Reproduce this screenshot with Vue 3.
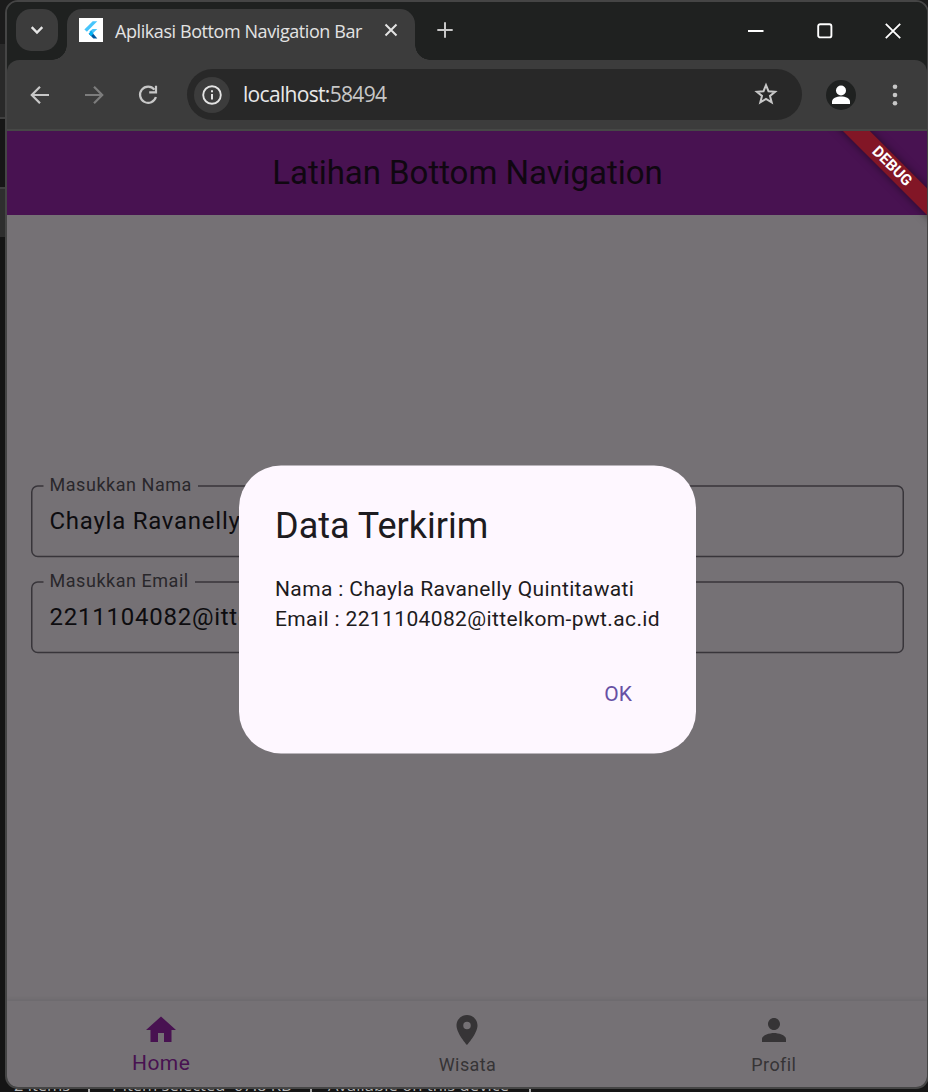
<script setup>
const fields = [
  { label: 'Masukkan Nama', value: 'Chayla Ravanelly Quintitawati', gapEnd: 167 },
  { label: 'Masukkan Email', value: '2211104082@ittelkom-pwt.ac.id', gapEnd: 164 },
]
const outline = (gapEnd) =>
  `M12.5 1H6.75A6 6 0 0 0 .75 7V65.5A6 6 0 0 0 6.75 71.5H866.25A6 6 0 0 0 872.25 65.5V7A6 6 0 0 0 866.25 1H${gapEnd}`

const tabs = [
  { label: 'Home', active: true, icon: 'M10 20v-6h4v6h5v-8h3L12 3 2 12h3v8z' },
  {
    label: 'Wisata',
    icon: 'M12 2C8.13 2 5 5.13 5 9c0 5.25 7 13 7 13s7-7.75 7-13c0-3.87-3.13-7-7-7zm0 9.5a2.5 2.5 0 0 1 0-5 2.5 2.5 0 0 1 0 5z',
  },
  {
    label: 'Profil',
    icon: 'M12 12c2.21 0 4-1.79 4-4s-1.79-4-4-4-4 1.79-4 4 1.79 4 4 4zm0 2c-2.67 0-8 1.34-8 4v2h16v-2c0-2.66-5.33-4-8-4z',
  },
]
const statusItems = ['2 items', '1 item selected  67.8 KB', 'Available on this device']
</script>

<template>
  <div class="desktop">
    <div class="behind">
      <i class="b1"></i><i class="b2"></i><i class="b3"></i><i class="b4"></i><i class="b5"></i>
    </div>
    <div class="status">
      <span v-for="s in statusItems" :key="s" class="status-item">{{ s }}</span>
    </div>

    <div class="window">
      <header class="titlebar">
        <button class="tab-search">
          <svg width="42" height="42" viewBox="0 0 42 42"><path d="M15.7 18.2l5.3 5.3 5.3-5.3" fill="none" stroke="#e6e6e6" stroke-width="2.4" /></svg>
        </button>
        <div class="tab">
          <svg class="favicon" width="24" height="24" viewBox="0 0 24 24">
            <rect width="24" height="24" fill="#fff" />
            <path d="M13.7 3.3h4.6L7.9 13.7 5.4 11.4z" fill="#47c5fb" />
            <path d="M13.7 11h4.6l-5.2 5.1-2.8-2.6z" fill="#47c5fb" />
            <path d="M9.7 15.7l2.4-2.4 6.2 7.3h-3.9z" fill="#00569e" />
            <path d="M9.7 15.7l2.4-2.4 2.4 2.4-2.4 2.4z" fill="#00b5f8" />
          </svg>
          <span class="tab-title">Aplikasi Bottom Navigation Bar</span>
          <svg class="tab-close" width="14" height="14" viewBox="0 0 14 14"><path d="M1.5 1.5l11 11M12.5 1.5l-11 11" stroke="#e3e3e3" stroke-width="2" /></svg>
        </div>
        <svg class="new-tab" width="16" height="16" viewBox="0 0 16 16"><path d="M8 .3v15.4M.3 8h15.4" stroke="#c7c7c7" stroke-width="2" /></svg>
        <div class="controls">
          <svg width="16" height="16" viewBox="0 0 16 16"><path d="M0 8h15.5" stroke="#fff" stroke-width="2" /></svg>
          <svg width="16" height="16" viewBox="0 0 16 16"><rect x="1.2" y="1.2" width="13.2" height="13.2" rx="2" fill="none" stroke="#fff" stroke-width="1.9" /></svg>
          <svg width="16" height="16" viewBox="0 0 16 16"><path d="M.8 .8l14.4 14.4M15.2 .8L.8 15.2" stroke="#fff" stroke-width="1.8" /></svg>
        </div>
      </header>

      <div class="toolbar">
        <svg class="nav-icon" width="20" height="20" viewBox="0 0 20 20"><path d="M19 10H2.5M10 1.8L1.8 10l8.2 8.2" fill="none" stroke="#c7c7c7" stroke-width="2.2" /></svg>
        <svg class="nav-icon" width="20" height="20" viewBox="0 0 20 20"><path d="M1 10h16.5M10 1.8L18.2 10 10 18.2" fill="none" stroke="#7c7c7c" stroke-width="2.2" /></svg>
        <svg class="nav-icon" width="20" height="20" viewBox="0 0 20 20"><path d="M16.400 4.600A8.100 8.100 0 1 0 17.900 12M18 .8V7.300H11.200" fill="none" stroke="#c7c7c7" stroke-width="2.2" /></svg>
        <div class="omnibox">
          <div class="site-info">
            <svg width="20" height="20" viewBox="0 0 20 20"><circle cx="10" cy="10" r="8.8" fill="none" stroke="#e3e3e3" stroke-width="1.9" /><path d="M10 9v5.500M10 5.200v2.100" stroke="#e3e3e3" stroke-width="2" /></svg>
          </div>
          <span class="url">localhost:<span class="port">58494</span></span>
          <svg class="star" width="24" height="24" viewBox="0 0 24 24"><path d="M12 3.100l2.500 6.100 6.600.5-5.100 4.200 1.700 6.500L12 16.900l-5.700 3.500 1.700-6.500-5.100-4.200 6.600-.5z" fill="none" stroke="#c7c7c7" stroke-width="2" /></svg>
        </div>
        <svg class="avatar" width="30" height="30" viewBox="0 0 30 30">
          <circle cx="15" cy="15" r="15" fill="#1f2120" />
          <circle cx="15" cy="10.500" r="5" fill="#fff" />
          <path d="M6 24v-2.200c0-3.600 4.500-5.300 9-5.300s9 1.700 9 5.300V24z" fill="#fff" />
        </svg>
        <svg class="menu" width="6" height="22" viewBox="0 0 6 22" fill="#c7c7c7"><circle cx="3" cy="2.700" r="2.300" /><circle cx="3" cy="11" r="2.300" /><circle cx="3" cy="19.300" r="2.300" /></svg>
      </div>

      <main class="app">
        <div class="appbar">
          <h1>Latihan Bottom Navigation</h1>
          <div class="banner-clip"><div class="banner">DEBUG</div></div>
        </div>
        <form class="content" @submit.prevent>
          <div v-for="f in fields" :key="f.label" class="field">
            <svg class="outline" width="873" height="73" viewBox="0 0 873 73"><path :d="outline(f.gapEnd)" fill="none" stroke="#38353a" stroke-width="1.5" /></svg>
            <label>{{ f.label }}</label>
            <div class="value">{{ f.value }}</div>
          </div>
        </form>
        <nav class="bottom-nav">
          <div v-for="t in tabs" :key="t.label" class="nav-item" :class="{ active: t.active }">
            <svg width="36" height="36" viewBox="0 0 24 24"><path :d="t.icon" fill="currentColor" /></svg>
            <span>{{ t.label }}</span>
          </div>
        </nav>
        <div class="dialog">
          <h2>Data Terkirim</h2>
          <p>Nama : Chayla Ravanelly Quintitawati<br />Email : 2211104082@ittelkom-pwt.ac.id</p>
          <button>OK</button>
        </div>
      </main>
    </div>
  </div>
</template>

<style>
body { background: #161616; overflow: hidden; }
</style>

<style scoped>
* { box-sizing: border-box; }
button { border: 0; padding: 0; background: none; font: inherit; }
svg { display: block; flex: none; }
.desktop { position: relative; width: 928px; height: 1092px; overflow: hidden; background: #161616; font-family: Roboto, sans-serif; }
.behind { position: absolute; inset: 0; display: flex; flex-direction: column; }
.b1 { height: 44px; background: #1b1b1b; }
.b2 { height: 75px; background: #292929; border-bottom: 2px solid #404040; }
.b3 { height: 68px; background: #161616; }
.b4 { height: 50px; background: #2e2e2e; border-top: 2px solid #404040; }
.b5 { flex: 1; background: #151515; }
.status { position: absolute; left: 14px; top: 1074px; display: flex; font: 16.500px/22px "Open Sans", sans-serif; color: #b5b5b5; white-space: pre; }
.status-item { border-right: 2px solid #aaa; }
.status-item:nth-child(1) { width: 76px; }
.status-item:nth-child(2) { width: 222px; padding-left: 19px; }
.status-item:nth-child(3) { width: 219px; padding-left: 16px; letter-spacing: .1px; }
.window { position: absolute; left: 5px; top: 0; width: 924px; height: 1089px; display: flex; flex-direction: column; background: #1f2120; border: 2px solid #454545; border-radius: 13px; overflow: hidden; }
.titlebar { height: 58px; display: flex; align-items: flex-start; background: #1f2120; }
.tab-search { width: 42px; height: 42px; margin: 7px 0 0 9px; background: #3c3c3c; border-radius: 15px; }
.tab { position: relative; width: 348px; height: 51px; margin: 7px 0 0 9px; padding-left: 12px; display: flex; background: #3c3c3c; border-radius: 15px 15px 0 0; }
.tab::before, .tab::after { content: ""; position: absolute; bottom: 0; width: 15px; height: 15px; }
.tab::before { left: -15px; background: radial-gradient(circle at 0 0, transparent 14.5px, #3c3c3c 15px); }
.tab::after { right: -15px; background: radial-gradient(circle at 100% 0, transparent 14.5px, #3c3c3c 15px); }
.favicon { margin-top: 9px; }
.tab-title { width: 257px; margin: 10px 0 0 12px; font: 18px/24px "Open Sans", sans-serif; letter-spacing: -.42px; color: #e3e3e3; white-space: nowrap; }
.tab-close { margin: 14px 0 0 12px; }
.new-tab { margin: 20px 0 0 22px; }
.controls { margin: 21px 26px 0 auto; display: flex; gap: 52.500px; }
.toolbar { position: relative; height: 71px; display: flex; align-items: center; padding: 0 0 1px 23px; background: #3c3c3c; border-bottom: 2px solid #464846; border-radius: 12px 12px 0 0; }
.nav-icon { margin-right: 34px; margin-top: 1px; }
.omnibox { width: 615px; height: 51px; margin-left: -5px; margin-top: 1px; padding-left: 7px; display: flex; align-items: center; background: #282828; border-radius: 26px; }
.site-info { width: 36px; height: 36px; display: flex; align-items: center; justify-content: center; border-radius: 50%; background: #3c3c3c; }
.url { margin: -1px 0 0 13px; font: 21px/28px "Open Sans", sans-serif; letter-spacing: -.68px; color: #e8e8e8; }
.port { color: #c7c7c7; }
.star { margin: -1px 24px 0 auto; }
.avatar { margin-left: 24px; margin-top: 1px; }
.menu { margin-left: 36px; margin-top: 1px; }
.app { position: relative; flex: 1; display: flex; flex-direction: column; background: #757175; }
.appbar { position: relative; height: 84px; display: flex; justify-content: center; background: #481251; }
h1 { margin: 0; padding-left: 1px; font-size: 33px; font-weight: 400; line-height: 84px; letter-spacing: -.03px; color: #100711; white-space: nowrap; }
.banner-clip { position: absolute; right: 0; top: 0; width: 120px; height: 96px; overflow: hidden; }
.banner { position: absolute; left: 5px; top: 26px; width: 160px; height: 18.5px; transform: rotate(45deg); background: #821626; box-shadow: 0 0 9px rgba(0, 0, 0, .5); color: #fff; font-size: 15.3px; font-weight: 700; line-height: 19px; text-align: center; }
.content { flex: 1; padding: 270px 24px 0; display: flex; flex-direction: column; gap: 23px; }
.field { position: relative; width: 873px; height: 73px; padding-left: 18.5px; display: flex; flex-direction: column; }
.outline { position: absolute; left: 0; top: 0; }
label { position: relative; margin-top: -11px; font-size: 18px; line-height: 22px; letter-spacing: .54px; color: #29272b; }
.value { margin-top: 8px; font-size: 24px; line-height: 34px; letter-spacing: .75px; color: #0d0c0f; white-space: nowrap; }
.bottom-nav { height: 86px; display: flex; padding-left: 1px; box-shadow: 0 -2px 3px rgba(88, 88, 93, .25); }
.nav-item { flex: 1; display: flex; flex-direction: column; align-items: center; padding-top: 11px; color: #363436; font-size: 18px; letter-spacing: .4px; }
.nav-item span { margin-top: 6px; line-height: 22px; }
.nav-item.active { color: #481251; font-size: 21px; letter-spacing: .45px; }
.nav-item.active span { margin-top: 4px; }
.dialog { position: absolute; left: 232px; top: 335px; width: 457px; height: 288px; padding: 36px; display: flex; flex-direction: column; color: #1d1b20; }
.dialog::before { content: ""; position: absolute; inset: 0; z-index: -1; background: #fef7ff; border-radius: 42px; transform: translateY(-.5px); }
.dialog { isolation: isolate; }
h2 { margin: 0; font-size: 36px; font-weight: 400; line-height: 48px; }
p { margin: 24px 0 0; font-size: 21px; line-height: 30px; letter-spacing: .375px; white-space: nowrap; }
.dialog button { align-self: flex-end; margin: 45px 28px 0 0; font-size: 21px; line-height: 30px; letter-spacing: .1px; color: #6750a4; }
</style>
